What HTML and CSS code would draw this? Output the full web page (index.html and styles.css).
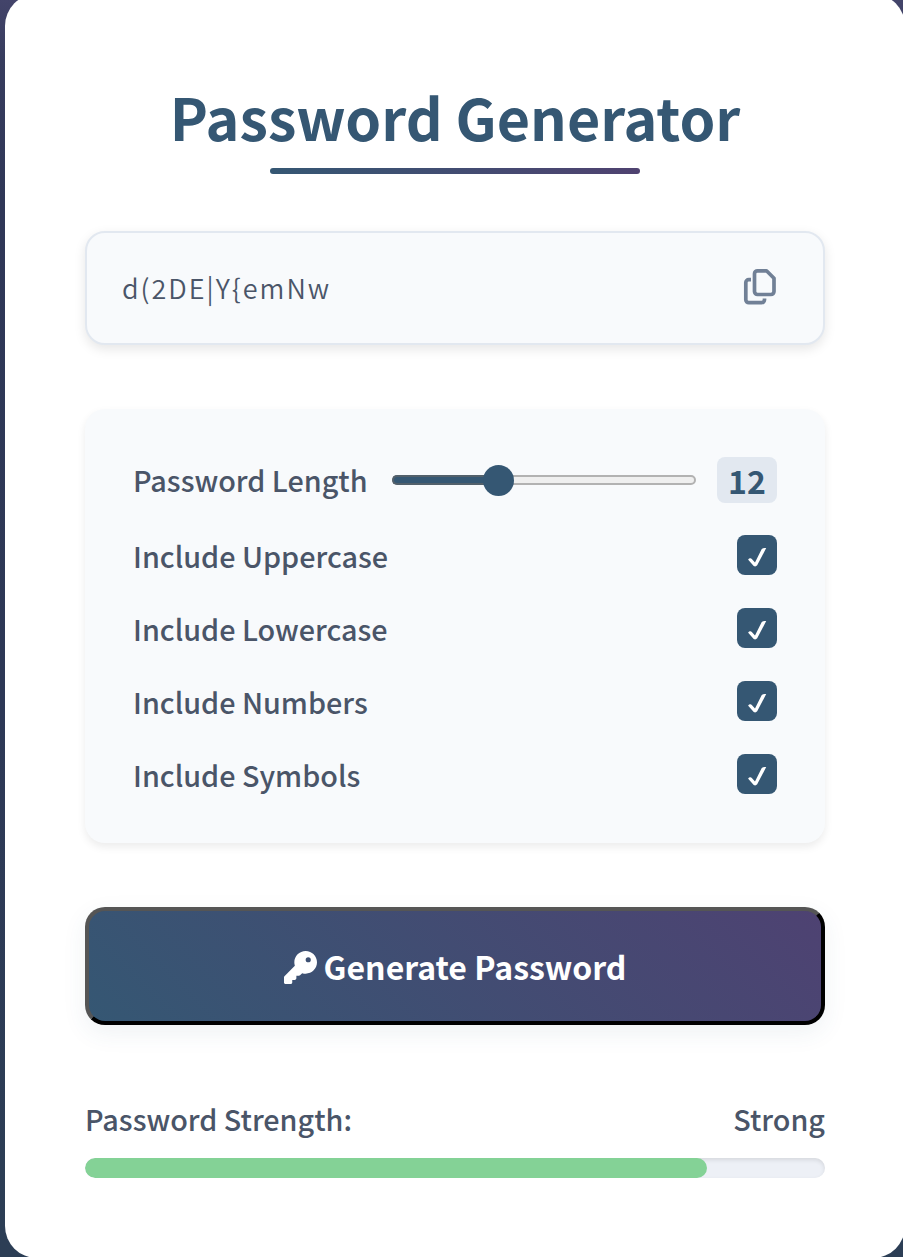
FILE: index.html
```html
<!DOCTYPE html>
<html lang="en">
<head>
<meta charset="utf-8">
<title>Password Generator</title>
<link rel="stylesheet" href="styles.css">
</head>
<body>
<main class="card">
  <h1 class="title">Password Generator</h1>
  <div class="underline"></div>

  <section class="display">
    <span class="password">d(2DE|Y{emNw</span>
    <svg class="copy" viewBox="0 0 36 40" fill="none" stroke="currentColor" stroke-width="3.700" stroke-linejoin="round">
      <path d="M15.500 3.800H24.500L32 11.300V24.500a3 3 0 0 1-3 3H15.500a3 3 0 0 1-3-3V6.800a3 3 0 0 1 3-3Z"/>
      <path d="M9 12.600H6.800a3 3 0 0 0-3 3V32.700a3 3 0 0 0 3 3H19.500a3 3 0 0 0 3-3V31.500"/>
    </svg>
  </section>

  <section class="settings">
    <div class="row length">
      <span class="label">Password Length</span>
      <div class="slider"><div class="fill"></div><div class="thumb"></div></div>
      <span class="count">12</span>
    </div>
    <div class="row"><span class="label">Include Uppercase</span><span class="check"><svg viewBox="0 0 40 40"><path d="M11.200 24.800C11.500 23.500 13.700 22.800 14.800 23.900L18 27.500L24.600 14.300Q25.700 12.600 29.200 13.100L20.200 30.300Q18.700 32.100 16.700 31Z"/></svg></span></div>
    <div class="row"><span class="label">Include Lowercase</span><span class="check"><svg viewBox="0 0 40 40"><path d="M11.200 24.800C11.500 23.500 13.700 22.800 14.800 23.900L18 27.500L24.600 14.300Q25.700 12.600 29.200 13.100L20.200 30.300Q18.700 32.100 16.700 31Z"/></svg></span></div>
    <div class="row"><span class="label">Include Numbers</span><span class="check"><svg viewBox="0 0 40 40"><path d="M11.200 24.800C11.500 23.500 13.700 22.800 14.800 23.900L18 27.500L24.600 14.300Q25.700 12.600 29.200 13.100L20.200 30.300Q18.700 32.100 16.700 31Z"/></svg></span></div>
    <div class="row"><span class="label">Include Symbols</span><span class="check"><svg viewBox="0 0 40 40"><path d="M11.200 24.800C11.500 23.500 13.700 22.800 14.800 23.900L18 27.500L24.600 14.300Q25.700 12.600 29.200 13.100L20.200 30.300Q18.700 32.100 16.700 31Z"/></svg></span></div>
  </section>

  <button class="generate">
    <svg class="key" viewBox="0 0 512 512"><path fill="currentColor" d="M336 352c97.200 0 176-78.800 176-176S433.200 0 336 0S160 78.800 160 176c0 18.700 2.900 36.800 8.300 53.700L7 391c-4.500 4.500-7 10.600-7 17v80c0 13.300 10.700 24 24 24h80c13.300 0 24-10.700 24-24v-40h40c13.300 0 24-10.700 24-24v-40h40c6.400 0 12.500-2.500 17-7l33.300-33.300c16.900 5.400 35 8.300 53.700 8.300zM376 96a40 40 0 1 1 0 80 40 40 0 1 1 0-80z"/></svg>
    <span>Generate Password</span>
  </button>

  <section class="strength">
    <div class="strength-text"><span>Password Strength:</span><span>Strong</span></div>
    <div class="meter"><div class="meter-fill"></div></div>
  </section>
</main>
</body>
</html>
```
FILE: styles.css
```css
* { box-sizing: border-box; }
html { height: 1257px; overflow: hidden; }
body {
  margin: 0;
  height: 1257px;
  overflow: hidden;
  background: linear-gradient(#43446a 0, #373c5e 60px, #2f3757 200px, #2d3856 700px, #2c3e55 1257px);
  font-family: "Noto Sans CJK SC", "Noto Sans", sans-serif;
  color: #4a5568;
}
.card {
  width: 900px;
  height: 1264px;
  margin: -6px 0 0 5px;
  padding: 80px;
  border-radius: 32px;
  background: #fff;
}
.title {
  margin: 0;
  height: 94px;
  line-height: 84px;
  font-size: 57.400px;
  font-weight: 700;
  text-align: center;
  white-space: nowrap;
  color: #355773;
}
.underline {
  width: 370px;
  height: 6px;
  margin: 0 auto;
  border-radius: 3px;
  background: linear-gradient(90deg, #355773, #4f4270);
}
.display {
  height: 114px;
  margin-top: 57px;
  padding: 0 45px 2px 35px;
  display: flex;
  align-items: center;
  justify-content: space-between;
  border: 2px solid #e2e8f0;
  border-radius: 20px;
  background: #f8fafc;
  box-shadow: 0 4px 12px rgba(0, 0, 0, .1);
}
.password { padding-top: 2px; font-size: 27px; font-weight: 350; line-height: 40px; letter-spacing: 2px; }
.copy { width: 36px; height: 40px; color: #718096; }
.settings {
  height: 434px;
  margin-top: 64px;
  padding: 48px;
  display: flex;
  flex-direction: column;
  border-radius: 20px;
  background: #f8fafc;
  box-shadow: 0 4px 8px rgba(0, 0, 0, .08);
}
.row {
  height: 40px;
  margin-bottom: 33px;
  display: flex;
  align-items: center;
  justify-content: space-between;
}
.row.length { height: 46px; margin-bottom: 32px; }
.label { padding-top: 2px; font-size: 28.750px; font-weight: 500; line-height: 40px; white-space: nowrap; }
.length .label { padding-top: 0; }
.slider {
  position: relative;
  width: 304px;
  height: 10px;
  margin-left: auto;
  margin-right: 21px;
  border: 2px solid #b2b2b2;
  border-radius: 5px;
  background: #efefef;
}
.fill {
  width: 105px;
  height: 10px;
  margin: -2px 0 0 -2px;
  border: 2px solid #52606b;
  border-right: 0;
  border-radius: 5px 0 0 5px;
  background: #355773;
}
.thumb {
  position: absolute;
  left: 88.500px;
  top: -12.500px;
  width: 31px;
  height: 31px;
  border-radius: 50%;
  background: #355773;
}
.count {
  width: 60px;
  height: 46px;
  border-radius: 8px;
  background: #e2e8f0;
  color: #355773;
  font-size: 32px;
  font-weight: 700;
  line-height: 46px;
  text-align: center;
}
.check { width: 40px; height: 40px; border-radius: 8px; background: #355773; }
.check svg { display: block; width: 40px; height: 40px; fill: #fff; }
.generate {
  width: 740px;
  height: 118px;
  margin-top: 64px;
  padding: 0;
  display: flex;
  align-items: center;
  justify-content: center;
  gap: 7px;
  border: 4px solid;
  border-color: #555 #000 #000 #555;
  border-radius: 20px;
  background: linear-gradient(45deg, #355773, #4e4272);
  box-shadow: 0 8px 24px rgba(53, 87, 115, .08);
  color: #fff;
  font-family: inherit;
  font-size: 32px;
  font-weight: 700;
  line-height: 48px;
}
.key { width: 33px; height: 33px; margin-top: 3px; }
.strength { margin-top: 72px; }
.strength-text {
  height: 61px;
  display: flex;
  justify-content: space-between;
  font-size: 28.750px;
  font-weight: 500;
  line-height: 44px;
}
.meter {
  height: 20px;
  border-radius: 10px;
  overflow: hidden;
  background: #edf0f6;
  box-shadow: inset 0 2px 4px rgba(0, 0, 0, .1);
}
.meter-fill { width: 622px; height: 20px; border-radius: 10px; background: #84d296; }
```
